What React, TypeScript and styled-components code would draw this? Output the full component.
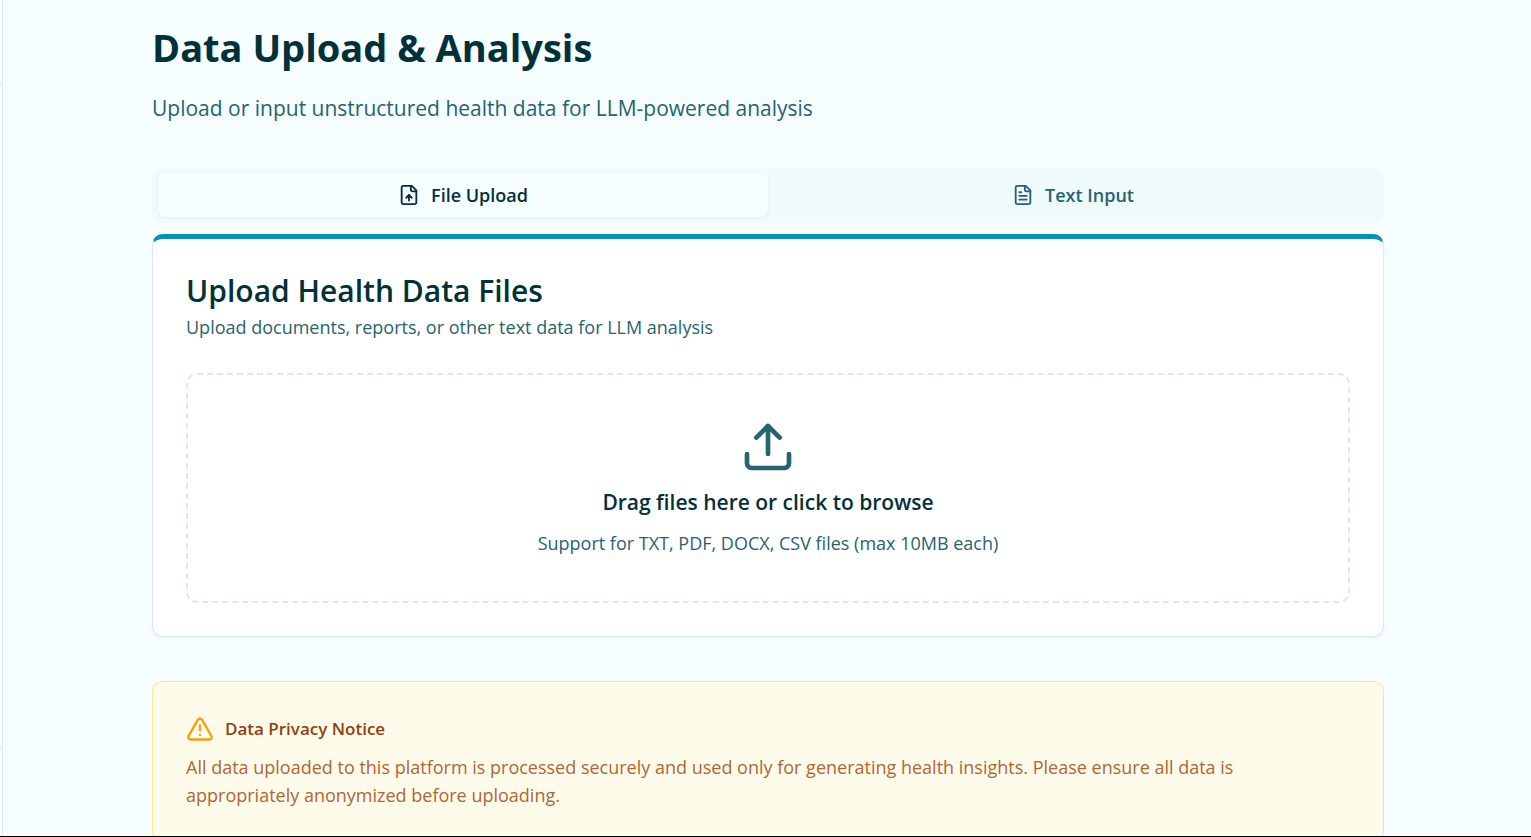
import React, { useState } from "react";
import styled, { createGlobalStyle } from "styled-components";

const GlobalStyle = createGlobalStyle`
  *, *::before, *::after { box-sizing: border-box; }
  body {
    margin: 0;
    background: #f5fdff;
    color: #03313a;
    font-family: "Segoe UI", "Open Sans", "Noto Sans", sans-serif;
  }
  h1, h2, h3, p { margin: 0; }
`;

const Shell = styled.div`
  display: flex;
  height: 100vh;
  overflow: hidden;
  border-bottom: 1px solid #000;
`;

const Sidebar = styled.aside`
  flex: 0 0 3px;
  display: flex;
  flex-direction: column;
  justify-content: space-between;
  background: #fbfeff;
  border-right: 1px solid #dde9eb;
`;

const SidebarHeader = styled.div`
  height: 85px;
  border-bottom: 1px solid #dde9eb;
`;

const SidebarFooter = styled.div`
  height: 88px;
  border-top: 1px solid #dde9eb;
`;

const Main = styled.main`
  flex: 1;
  min-width: 0;
  padding: 22px 147px 0 149px;
`;

const PageTitle = styled.h1`
  font-size: 38px;
  font-weight: 700;
  line-height: 50px;
`;

const PageSubtitle = styled.p`
  margin-top: 20px;
  color: #26646f;
  font-size: 21px;
  line-height: 32px;
`;

const TabList = styled.div`
  display: grid;
  grid-template-columns: 1fr 1fr;
  margin-top: 44px;
  padding: 5px 6px 6px;
  border-radius: 11px;
  background: #effafa;
`;

const Tab = styled.button<{ $active: boolean }>`
  display: flex;
  align-items: center;
  justify-content: center;
  gap: 11px;
  height: 44px;
  padding: 0 16px;
  border: 0;
  border-radius: 7px;
  background: ${(p) => (p.$active ? "#f5fdff" : "transparent")};
  box-shadow: ${(p) => (p.$active ? "0 1px 3px rgba(0, 0, 0, 0.08)" : "none")};
  color: ${(p) => (p.$active ? "#03313a" : "#26646f")};
  font-family: inherit;
  font-size: 18px;
  font-weight: 600;
  line-height: 28px;
  cursor: pointer;
`;

const Card = styled.section`
  margin-top: 11px;
  padding: 32px 33px 33px;
  border: 1px solid #dde9eb;
  border-top: 5px solid #0891b2;
  border-radius: 11px;
  background: #fff;
  box-shadow: 0 1px 3px rgba(0, 0, 0, 0.05);
`;

const CardTitle = styled.h2`
  font-size: 30px;
  font-weight: 600;
  line-height: 40px;
`;

const CardText = styled.p`
  margin-top: 2px;
  color: #26646f;
  font-size: 18px;
  line-height: 28px;
`;

const DropZone = styled.label`
  position: relative;
  display: flex;
  flex-direction: column;
  align-items: center;
  margin-top: 32px;
  padding: 44px;
  border: 2px dashed #dde9eb;
  border-radius: 11px;
  text-align: center;
  cursor: pointer;
`;

const FileInput = styled.input`
  position: absolute;
  inset: 0;
  width: 100%;
  height: 100%;
  opacity: 0;
  cursor: pointer;
`;

const DropTitle = styled.span`
  margin-top: 11px;
  font-size: 21px;
  font-weight: 600;
  line-height: 32px;
`;

const DropHint = styled.span`
  margin-top: 11px;
  color: #26646f;
  font-size: 18px;
  line-height: 28px;
`;

const Notice = styled.section`
  margin-top: 44px;
  padding: 33px;
  border: 1px solid #fde68a;
  border-radius: 11px;
  background: #fffbeb;
`;

const NoticeHeader = styled.div`
  display: flex;
  align-items: center;
  gap: 11px;
`;

const NoticeTitle = styled.h3`
  color: #92400e;
  font-size: 17px;
  font-weight: 600;
  line-height: 28px;
`;

const NoticeText = styled.p`
  margin-top: 10px;
  color: #af6636;
  font-size: 18px;
  line-height: 28px;
`;

const Icon = styled.svg<{ $size: number; $color?: string }>`
  flex: none;
  width: ${(p) => p.$size}px;
  height: ${(p) => p.$size}px;
  fill: none;
  stroke: ${(p) => p.$color ?? "currentColor"};
  stroke-width: 2;
  stroke-linecap: round;
  stroke-linejoin: round;
`;

const FILE_OUTLINE = "M15 2H6a2 2 0 0 0-2 2v16a2 2 0 0 0 2 2h12a2 2 0 0 0 2-2V7Z";
const FILE_FOLD = "M14 2v4a2 2 0 0 0 2 2h4";

const FileUpIcon = () => (
  <Icon viewBox="0 0 24 24" $size={22} aria-hidden="true">
    <path d={FILE_OUTLINE} />
    <path d={FILE_FOLD} />
    <path d="M12 12v6" />
    <path d="m15 15-3-3-3 3" />
  </Icon>
);

const FileTextIcon = () => (
  <Icon viewBox="0 0 24 24" $size={22} aria-hidden="true">
    <path d={FILE_OUTLINE} />
    <path d={FILE_FOLD} />
    <path d="M10 9H8" />
    <path d="M16 13H8" />
    <path d="M16 17H8" />
  </Icon>
);

const UploadIcon = () => (
  <Icon viewBox="0 0 24 24" $size={56} $color="#26646f" aria-hidden="true">
    <path d="M21 15v4a2 2 0 0 1-2 2H5a2 2 0 0 1-2-2v-4" />
    <path d="m17 8-5-5-5 5" />
    <path d="M12 3v12" />
  </Icon>
);

const WarningIcon = () => (
  <Icon viewBox="0 0 24 24" $size={28} $color="#f59e0b" aria-hidden="true">
    <path d="m21.73 18-8-14a2 2 0 0 0-3.48 0l-8 14A2 2 0 0 0 4 21h16a2 2 0 0 0 1.73-3" />
    <path d="M12 9v4" />
    <path d="M12 17h.01" />
  </Icon>
);

export default function App() {
  const [tab, setTab] = useState<"file" | "text">("file");

  return (
    <>
      <GlobalStyle />
      <Shell>
        <Sidebar>
          <SidebarHeader />
          <SidebarFooter />
        </Sidebar>
        <Main>
          <PageTitle>Data Upload &amp; Analysis</PageTitle>
          <PageSubtitle>
            Upload or input unstructured health data for LLM-powered analysis
          </PageSubtitle>

          <TabList role="tablist">
            <Tab
              type="button"
              role="tab"
              aria-selected={tab === "file"}
              $active={tab === "file"}
              onClick={() => setTab("file")}
            >
              <FileUpIcon />
              File Upload
            </Tab>
            <Tab
              type="button"
              role="tab"
              aria-selected={tab === "text"}
              $active={tab === "text"}
              onClick={() => setTab("text")}
            >
              <FileTextIcon />
              Text Input
            </Tab>
          </TabList>

          <Card>
            <CardTitle>Upload Health Data Files</CardTitle>
            <CardText>Upload documents, reports, or other text data for LLM analysis</CardText>
            <DropZone htmlFor="health-files">
              <UploadIcon />
              <DropTitle>Drag files here or click to browse</DropTitle>
              <DropHint>Support for TXT, PDF, DOCX, CSV files (max 10MB each)</DropHint>
              <FileInput id="health-files" type="file" multiple accept=".txt,.pdf,.docx,.csv" />
            </DropZone>
          </Card>

          <Notice>
            <NoticeHeader>
              <WarningIcon />
              <NoticeTitle>Data Privacy Notice</NoticeTitle>
            </NoticeHeader>
            <NoticeText>
              All data uploaded to this platform is processed securely and used only for generating
              health insights. Please ensure all data is appropriately anonymized before uploading.
            </NoticeText>
          </Notice>
        </Main>
      </Shell>
    </>
  );
}
